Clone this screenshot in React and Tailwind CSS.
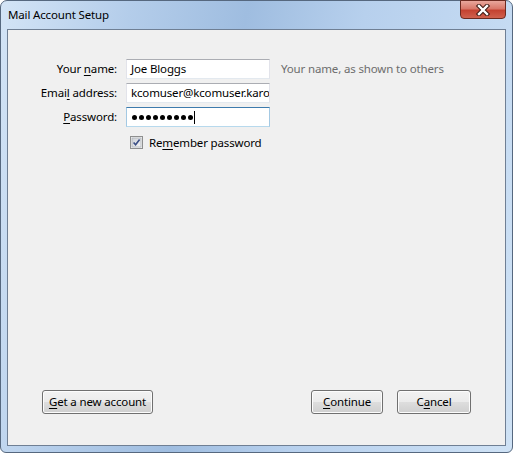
import { useState } from "react";

const font = { fontFamily: '"Noto Sans", "Open Sans", sans-serif' };

function Btn({ children, w }) {
  return (
    <button
      type="button"
      className={`h-[24px] ${w} rounded-[3px] border border-[#707070] bg-[linear-gradient(to_bottom,#f2f2f2_0%,#ebebeb_48%,#dddddd_52%,#cfcfcf_100%)] text-[11.5px] tracking-[-0.15px] text-black leading-none shadow-[inset_0_0_0_1px_#fcfcfc]`}
    >
      {children}
    </button>
  );
}

function CheckBox() {
  return (
    <svg width="13" height="13" viewBox="0 0 13 13" className="shrink-0">
      <defs>
        <linearGradient id="cbg" x1="0" y1="0" x2="1" y2="1">
          <stop offset="0" stopColor="#cbcfd5" />
          <stop offset="1" stopColor="#f6f6f6" />
        </linearGradient>
      </defs>
      <rect x="0.5" y="0.5" width="12" height="12" fill="#f4f4f4" stroke="#8e8f8f" />
      <rect x="2" y="2" width="9" height="9" fill="url(#cbg)" stroke="#aeb3b9" strokeWidth="0.8" />
      <path d="M3.6 6.4 L5.6 8.8 L9.6 3.4" fill="none" stroke="#3b4f86" strokeWidth="1.6" />
    </svg>
  );
}

function CloseIcon() {
  return (
    <svg width="16" height="12" viewBox="0 0 16 12">
      <path d="M4 2 L12 10 M12 2 L4 10" stroke="#3d1812" strokeWidth="4.4" strokeLinecap="square" />
      <path d="M4 2 L12 10 M12 2 L4 10" stroke="#ffffff" strokeWidth="2.4" strokeLinecap="square" />
    </svg>
  );
}

export default function App() {
  const [remember] = useState(true);
  const dots = Array.from({ length: 9 });

  return (
    <div className="w-[513px] h-[453px] bg-white overflow-hidden" style={font}>
      <div className="w-full h-full flex flex-col rounded-t-[7px] rounded-b-[6px] border border-[#56687f] bg-[linear-gradient(100deg,#d3e4f6_0%,#b4cdea_22%,#9fbde0_42%,#b7d0ed_62%,#c4daf2_85%,#cfe2f5_100%)]">
        {/* title bar */}
        <div className="h-[28px] flex items-start justify-between pl-[7px] pr-[6px]">
          <span className="text-[11.5px] tracking-[-0.15px] text-black mt-[5px]">Mail Account Setup</span>
          <div className="w-[46px] h-[19px] -mt-px flex items-center justify-center rounded-b-[4px] border border-[#6c2a20] bg-[linear-gradient(to_bottom,#e9a79c_0%,#d9786a_45%,#c44231_55%,#d0614e_100%)]">
            <CloseIcon />
          </div>
        </div>

        {/* client area */}
        <div className="flex-1 mx-[6px] mb-[6px] border border-[#6f7f94] bg-[#f0f0f0] flex flex-col">
          <div className="mt-[29px] grid grid-cols-[109px_144px_auto] gap-x-[9px] gap-y-[4px] items-center text-[11.5px] tracking-[-0.15px] text-black">
            <label className="text-right">
              Your <u className="underline-offset-2">n</u>ame:
            </label>
            <div className="h-[20px] flex items-center pl-[4px] bg-white border border-[#abadb3] border-l-[#e2e3ea] border-r-[#e2e3ea] border-b-[#e3e9ef]">
              Joe Bloggs
            </div>
            <span className="ml-[2px] text-[#6d6d6d]">Your name, as shown to others</span>

            <label className="text-right">
              Emai<u className="underline-offset-2">l</u> address:
            </label>
            <div className="h-[20px] flex items-center pl-[4px] bg-white border border-[#abadb3] border-l-[#e2e3ea] border-r-[#e2e3ea] border-b-[#e3e9ef] overflow-hidden whitespace-nowrap">
              kcomuser@kcomuser.karo
            </div>
            <span />

            <label className="text-right">
              <u className="underline-offset-2">P</u>assword:
            </label>
            <div className="h-[20px] flex items-center pl-[5px] bg-white border border-[#3d7bad] border-l-[#a4c9e3] border-r-[#a4c9e3] border-b-[#b7d9ed]">
              <div className="flex items-center gap-[2px]">
                {dots.map((_, i) => (
                  <span key={i} className="w-[5px] h-[5px] rounded-full bg-black" />
                ))}
              </div>
              <span className="w-px h-[13px] bg-black ml-[1px]" />
            </div>
            <span />

            <span />
            <div className="mt-[3px] flex items-center gap-[6px] pl-[4px]">
              {remember && <CheckBox />}
              <span>
                Re<u className="underline-offset-2">m</u>ember password
              </span>
            </div>
            <span />
          </div>

          <div className="flex-1" />

          <div className="flex items-center pl-[34px] pr-[34px] pb-[31px]">
            <Btn w="w-[111px]">
              <u className="underline-offset-2">G</u>et a new account
            </Btn>
            <div className="flex-1" />
            <div className="flex gap-[14px]">
              <Btn w="w-[72px]">
                <u className="underline-offset-2">C</u>ontinue
              </Btn>
              <Btn w="w-[74px]">
                C<u className="underline-offset-2">a</u>ncel
              </Btn>
            </div>
          </div>
        </div>
      </div>
    </div>
  );
}
